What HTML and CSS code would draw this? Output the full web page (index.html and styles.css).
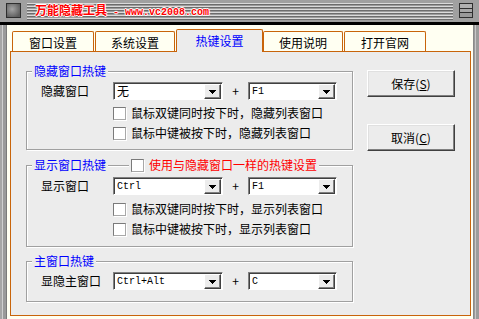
FILE: index.html
```html
<!DOCTYPE html>
<html lang="zh-CN">
<head>
<meta charset="utf-8">
<title>万能隐藏工具</title>
<link rel="stylesheet" href="styles.css">
</head>
<body>
<div class="titlebar">
  <span class="sysicon"></span>
  <div class="stripes"><span class="title">万能隐藏工具<span class="url"> - www.vc2008.com</span></span></div>
  <span class="menuicon"></span>
</div>
<div class="frame">
  <div class="frame-left"></div>
  <div class="client">
    <div class="tabs">
      <div class="tab t1">窗口设置</div>
      <div class="tab t2">系统设置</div>
      <div class="tab t3 active">热键设置</div>
      <div class="tab t4">使用说明</div>
      <div class="tab t5">打开官网</div>
    </div>
    <div class="panel">
      <div class="groups">
        <div class="group g1">
          <span class="legend">隐藏窗口热键</span>
          <div class="row">
            <span class="label">隐藏窗口</span>
            <div class="select s1"><span class="val cjk">无</span><span class="drop"><svg width="7" height="4" viewBox="0 0 7 4"><polygon points="0,0 7,0 3.5,4" fill="#000"/></svg></span></div>
            <span class="plus">+</span>
            <div class="select s2"><span class="val">F1</span><span class="drop"><svg width="7" height="4" viewBox="0 0 7 4"><polygon points="0,0 7,0 3.5,4" fill="#000"/></svg></span></div>
          </div>
          <div class="checks">
            <div class="check"><span class="box"></span>鼠标双键同时按下时，隐藏列表窗口</div>
            <div class="check"><span class="box"></span>鼠标中键被按下时，隐藏列表窗口</div>
          </div>
        </div>
        <div class="group g2">
          <span class="legend">显示窗口热键</span>
          <span class="legend2"><span class="box"></span>使用与隐藏窗口一样的热键设置</span>
          <div class="row">
            <span class="label">显示窗口</span>
            <div class="select s1"><span class="val">Ctrl</span><span class="drop"><svg width="7" height="4" viewBox="0 0 7 4"><polygon points="0,0 7,0 3.5,4" fill="#000"/></svg></span></div>
            <span class="plus">+</span>
            <div class="select s2"><span class="val">F1</span><span class="drop"><svg width="7" height="4" viewBox="0 0 7 4"><polygon points="0,0 7,0 3.5,4" fill="#000"/></svg></span></div>
          </div>
          <div class="checks">
            <div class="check"><span class="box"></span>鼠标双键同时按下时，显示列表窗口</div>
            <div class="check"><span class="box"></span>鼠标中键被按下时，显示列表窗口</div>
          </div>
        </div>
        <div class="group g3">
          <span class="legend">主窗口热键</span>
          <div class="row">
            <span class="label">显隐主窗口</span>
            <div class="select s1"><span class="val">Ctrl+Alt</span><span class="drop"><svg width="7" height="4" viewBox="0 0 7 4"><polygon points="0,0 7,0 3.5,4" fill="#000"/></svg></span></div>
            <span class="plus">+</span>
            <div class="select s2"><span class="val">C</span><span class="drop"><svg width="7" height="4" viewBox="0 0 7 4"><polygon points="0,0 7,0 3.5,4" fill="#000"/></svg></span></div>
          </div>
        </div>
      </div>
      <div class="buttons">
        <div class="btn">保存(<u>S</u>)</div>
        <div class="btn">取消(<u>C</u>)</div>
      </div>
    </div>
  </div>
  <div class="frame-right"></div>
</div>
</body>
</html>
```
FILE: styles.css
```css
* { box-sizing: border-box; }
html, body { margin: 0; padding: 0; }
body {
  width: 479px;
  height: 319px;
  overflow: hidden;
  background: #a0a0a0;
  font-family: "Noto Sans CJK SC", "Noto Sans", sans-serif;
  font-size: 12px;
  line-height: 14px;
  color: #000;
}

/* title bar */
.titlebar {
  height: 25px;
  border-bottom: 3px solid #000;
  background: #a0a0a0;
  display: flex;
  align-items: flex-start;
}
.sysicon {
  margin: 3px 0 0 6px;
  width: 15px;
  height: 15px;
  border: 1px solid #2e2e2e;
  background: radial-gradient(circle at 40% 40%, #a4a4a4, #5c5c5c 80%);
}
.stripes {
  margin: 3px 0 0 6px;
  width: 426px;
  height: 17px;
  background: repeating-linear-gradient(to bottom, #dadada 0 1px, #6c6c6c 1px 2px, #9c9c9c 2px 3px);
  display: flex;
  align-items: center;
  padding-left: 8px;
}
.title {
  color: #ff0000;
  font-size: 12px;
  line-height: 14px;
  font-weight: bold;
  text-shadow: 1px 0 0 #fff, -1px 0 0 #fff, 0 1px 0 #fff, 0 -1px 0 #fff;
  white-space: pre;
}
.url {
  font-family: "Liberation Mono", monospace;
  font-size: 10px;
}
.menuicon {
  margin: 3px 0 0 6px;
  width: 14px;
  height: 15px;
  border: 1px solid #2e2e2e;
  background: linear-gradient(to bottom, #b0b0b0 0 4px, #2e2e2e 4px 5px, #a8a8a8 5px 8px, #2e2e2e 8px 9px, #9a9a9a 9px);
}

/* frame */
.frame {
  display: flex;
  height: 294px;
}
.frame-left {
  width: 7px;
  background: linear-gradient(to right, #a6a6a6 0 2px, #cfcfcf 2px 3px, #9a9a9a 3px 6px, #7a7a7a 6px 7px);
}
.frame-right {
  width: 6px;
  background: linear-gradient(to right, #8a8a8a 0 1px, #9a9a9a 1px 2px, #c8c8c8 2px 3px, #9c9c9c 3px 6px);
}
.client {
  flex: 1;
  background: #fffff2;
  padding: 4px 2px 3px 3px;
  display: flex;
  flex-direction: column;
}

/* tabs */
.tabs {
  display: flex;
  align-items: flex-end;
  height: 22px;
}
.tab {
  height: 20px;
  border: 1px solid #c8640a;
  border-bottom: none;
  border-radius: 2px 2px 0 0;
  display: flex;
  align-items: center;
  justify-content: center;
  padding-top: 2px;
  background: #fffff2;
}
.t1 { margin-left: 2px; width: 82px; }
.t2 { margin-left: 1px; width: 80px; }
.t3 { margin-left: 1px; width: 87px; }
.t4 { width: 80px; }
.t5 { margin-left: 1px; width: 82px; }
.tab.active {
  height: 23px;
  margin-bottom: -1px;
  background: #ececec;
  color: #0000ff;
  padding-top: 0;
  position: relative;
  z-index: 1;
}

/* panel */
.panel {
  flex: 1;
  border: 1px solid #c8640a;
  background: #ececec;
  display: flex;
  align-items: flex-start;
  padding: 18px 0 0 15px;
}
.groups {
  width: 327px;
  margin-top: 1px;
  display: flex;
  flex-direction: column;
}
.group {
  position: relative;
  border: 1px solid #a0a0a0;
  box-shadow: inset 1px 1px 0 #fff, 1px 1px 0 #fff;
}
.g1 { padding: 10px 0 6px 14px; }
.g2 { margin-top: 15px; padding: 11px 0 7px 14px; }
.g3 { margin-top: 14px; padding: 10px 0 11px 14px; }

.legend {
  position: absolute;
  left: 5px;
  top: -8px;
  padding: 0 2px;
  background: #ececec;
  color: #0000ff;
  line-height: 14px;
}
.legend2 {
  position: absolute;
  left: 102px;
  top: -8px;
  height: 14px;
  padding: 0 2px;
  background: #ececec;
  color: #ff0000;
  display: flex;
  align-items: center;
}

.row {
  display: flex;
  align-items: center;
  height: 18px;
}
.label { width: 72px; }
.select {
  height: 18px;
  background: #fff;
  border: 1px solid;
  border-color: #808080 #fff #fff #808080;
  box-shadow: inset 1px 1px 0 #404040;
  display: flex;
  align-items: flex-start;
  padding-left: 3px;
}
.s1 { width: 110px; }
.s2 { width: 89px; }
.val {
  font-family: "Liberation Mono", monospace;
  font-size: 10px;
  line-height: 17px;
}
.val.cjk {
  font-family: "Noto Sans CJK SC", sans-serif;
  font-size: 12px;
  line-height: 16px;
}
.drop {
  margin-left: auto;
  margin-right: 1px;
  margin-top: 1px;
  width: 17px;
  height: 15px;
  background: #ececec;
  border: 1px solid;
  border-color: #fff #404040 #404040 #fff;
  box-shadow: inset -1px -1px 0 #808080;
  display: flex;
  align-items: center;
  justify-content: center;
}
.drop svg { display: block; shape-rendering: crispEdges; }
.plus {
  width: 25px;
  text-align: center;
}

.g1 .checks { margin-top: 3px; }
.g2 .checks { margin-top: 4px; }
.check {
  display: flex;
  align-items: center;
  height: 20px;
  padding-left: 72px;
}
.box {
  width: 13px;
  height: 13px;
  margin-right: 5px;
  background: #fff;
  border: 1px solid;
  border-color: #7a7a7a #a8a8a8 #a8a8a8 #7a7a7a;
  box-shadow: 1px 1px 0 #fff;
  flex: none;
}

/* buttons */
.buttons {
  margin-left: 14px;
  display: flex;
  flex-direction: column;
  gap: 27px;
}
.btn {
  width: 88px;
  height: 27px;
  background: #ececec;
  border: 1px solid;
  border-color: #fff #404040 #404040 #fff;
  box-shadow: inset -1px -1px 0 #808080, inset 1px 1px 0 #e0e0e0;
  display: flex;
  align-items: center;
  justify-content: center;
}
.btn u { text-decoration: underline; }
```
